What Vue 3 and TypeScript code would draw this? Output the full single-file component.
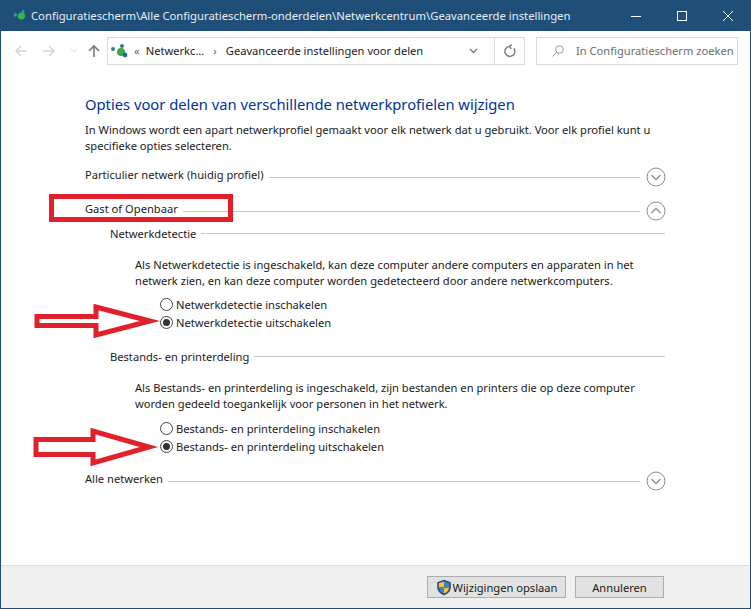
<template>
  <div class="window">
    <header class="titlebar">
      <svg class="title-icon" width="16" height="16" viewBox="0 0 16 16">
        <circle cx="3.5" cy="7" r="1.8" fill="#2f9ba8" />
        <circle cx="9.5" cy="8" r="3.6" fill="#39b54a" />
        <circle cx="11" cy="3.5" r="1.5" fill="#2f9ba8" />
      </svg>
      <span class="title-text">{{ title }}</span>
      <div class="win-btns">
        <svg width="12" height="12" viewBox="0 0 12 12"><path d="M1 6.500h10" stroke="#fff" fill="none" /></svg>
        <svg width="12" height="12" viewBox="0 0 12 12"><rect x="1.500" y="1.500" width="9" height="9" stroke="#fff" fill="none" /></svg>
        <svg width="12" height="12" viewBox="0 0 12 12"><path d="M1 1l10 10M11 1L1 11" stroke="#fff" fill="none" /></svg>
      </div>
    </header>

    <nav class="toolbar">
      <div class="nav-btns">
        <svg width="14" height="14" viewBox="0 0 14 14"><path d="M13 7H2M7 2L2 7l5 5" stroke="#d2d2d2" stroke-width="1.400" fill="none" /></svg>
        <svg width="14" height="14" viewBox="0 0 14 14"><path d="M1 7h11M7 2l5 5-5 5" stroke="#d2d2d2" stroke-width="1.400" fill="none" /></svg>
        <svg width="8" height="6" viewBox="0 0 8 6"><path d="M1 1l3 3 3-3" stroke="#d8d8d8" fill="none" /></svg>
        <svg class="up" width="14" height="14" viewBox="0 0 14 14"><path d="M7 13V2M2 7l5-5 5 5" stroke="#7a7a7a" stroke-width="1.600" fill="none" /></svg>
      </div>
      <div class="address">
        <svg width="18" height="16" viewBox="0 0 18 16">
          <circle cx="3" cy="6" r="2" fill="#2f7f8f" />
          <circle cx="11" cy="9" r="4" fill="#39a845" />
          <circle cx="12" cy="3" r="2" fill="#2f7f8f" />
          <circle cx="15" cy="12" r="2.400" fill="#2467a8" />
        </svg>
        <span class="crumb-sep">«</span>
        <span>Netwerkc...</span>
        <span class="crumb-arrow">›</span>
        <span>Geavanceerde instellingen voor delen</span>
        <svg class="addr-drop" width="9" height="6" viewBox="0 0 9 6"><path d="M1 1l3.500 3.500L8 1" stroke="#777" stroke-width="1.300" fill="none" /></svg>
        <span class="refresh">
          <svg width="14" height="14" viewBox="0 0 14 14"><path d="M10.800 4.200A5 5 0 1 1 6 2.400M6 2.400L8.800 0.800M6 2.400l2.400 2.400" stroke="#777" stroke-width="1.400" fill="none" /></svg>
        </span>
      </div>
      <div class="search">
        <svg width="14" height="14" viewBox="0 0 14 14"><circle cx="8.500" cy="5.500" r="3.800" stroke="#999" fill="none" /><path d="M5.800 8.200L1.500 12.500" stroke="#999" fill="none" /></svg>
        <span>In Configuratiescherm zoeken</span>
      </div>
    </nav>

    <main class="content">
      <h1>Opties voor delen van verschillende netwerkprofielen wijzigen</h1>
      <p class="intro">In Windows wordt een apart netwerkprofiel gemaakt voor elk netwerk dat u gebruikt. Voor elk profiel kunt u specifieke opties selecteren.</p>

      <div class="profile first">
        <span>Particulier netwerk (huidig profiel)</span>
        <i class="rule" />
        <svg class="toggle" width="20" height="20" viewBox="0 0 20 20"><circle cx="10" cy="10" r="9" stroke="#8c8c8c" fill="#fff" /><path d="M5.500 8L10 12.500 14.500 8" stroke="#8c8c8c" stroke-width="1.300" fill="none" /></svg>
      </div>
      <div class="profile second">
        <span>Gast of Openbaar</span>
        <i class="rule" />
        <svg class="toggle" width="20" height="20" viewBox="0 0 20 20"><circle cx="10" cy="10" r="9" stroke="#8c8c8c" fill="#fff" /><path d="M5.500 12L10 7.500 14.500 12" stroke="#8c8c8c" stroke-width="1.300" fill="none" /></svg>
        <svg class="mark-box" width="184" height="28" viewBox="0 0 184 28"><rect x="2.500" y="2.500" width="179" height="23" stroke="#e2202c" stroke-width="5" fill="none" /></svg>
      </div>

      <section v-for="s in sections" :key="s.name" class="setting">
        <div class="setting-head">
          <span>{{ s.name }}</span>
          <i class="rule" />
        </div>
        <p class="setting-text">{{ s.text }}</p>
        <div class="radios">
          <svg class="arrow" :style="{ left: `${s.arrowX}px`, top: `${s.arrowY}px` }" width="126" height="44" viewBox="0 0 126 44">
            <path :d="s.arrow" stroke="#e2202c" stroke-width="5" fill="none" />
          </svg>
          <label v-for="o in s.options" :key="o.label" class="radio">
            <span class="dot" :class="{ on: o.on }" />
            {{ o.label }}
          </label>
        </div>
      </section>

      <div class="profile last">
        <span>Alle netwerken</span>
        <i class="rule" />
        <svg class="toggle" width="20" height="20" viewBox="0 0 20 20"><circle cx="10" cy="10" r="9" stroke="#8c8c8c" fill="#fff" /><path d="M5.500 8L10 12.500 14.500 8" stroke="#8c8c8c" stroke-width="1.300" fill="none" /></svg>
      </div>
    </main>

    <footer class="footer">
      <button class="btn save">
        <svg width="16" height="17" viewBox="0 0 16 17">
          <path d="M8 .8l6.800 2.400v5c0 4-3 6.800-6.800 8C4.200 15 1.200 12.200 1.200 8.200v-5z" fill="#2b4f7e" />
          <path d="M8 2.400v6H2.800V4.200zM8 8.400h5.200C13 11.400 10.800 13.600 8 14.600z" fill="#f4c23c" />
          <path d="M8 2.400l5.200 1.800v4.200H8zM8 8.400v6.200c-2.800-1-4.800-3.200-5.200-6.200z" fill="#3f7fc4" />
        </svg>
        Wijzigingen opslaan
      </button>
      <button class="btn cancel">Annuleren</button>
    </footer>
  </div>
</template>

<script setup lang="ts">
const title = 'Configuratiescherm\\Alle Configuratiescherm-onderdelen\\Netwerkcentrum\\Geavanceerde instellingen'

const sections = [
  {
    name: 'Netwerkdetectie',
    text: 'Als Netwerkdetectie is ingeschakeld, kan deze computer andere computers en apparaten in het netwerk zien, en kan deze computer worden gedetecteerd door andere netwerkcomputers.',
    arrowX: -126,
    arrowY: 4,
    arrow: 'M3 17.500H62V8L116 22 62 36V26.500H3Z',
    options: [
      { label: 'Netwerkdetectie inschakelen', on: false },
      { label: 'Netwerkdetectie uitschakelen', on: true }
    ]
  },
  {
    name: 'Bestands- en printerdeling',
    text: 'Als Bestands- en printerdeling is ingeschakeld, zijn bestanden en printers die op deze computer worden gedeeld toegankelijk voor personen in het netwerk.',
    arrowX: -127,
    arrowY: 6,
    arrow: 'M3 14.500H60V6L116 22 60 38V29.500H3Z',
    options: [
      { label: 'Bestands- en printerdeling inschakelen', on: false },
      { label: 'Bestands- en printerdeling uitschakelen', on: true }
    ]
  }
]
</script>

<style>
html, body { margin: 0; background: #fff; }
</style>

<style scoped>
.window {
  width: 751px;
  height: 609px;
  display: flex;
  flex-direction: column;
  box-sizing: border-box;
  border: 1px solid #1f4e79;
  border-top: 0;
  font-family: "Noto Sans", "Open Sans", sans-serif;
  font-size: 11.15px;
  color: #1a1a1a;
  overflow: hidden;
}
.titlebar {
  height: 31px;
  flex: none;
  background: #1f4e79;
  display: flex;
  align-items: center;
  padding-left: 11px;
  color: #e8eef4;
  font-size: 11.28px;
}
.title-icon { margin-right: 3px; }
.title-text { white-space: nowrap; }
.win-btns {
  margin-left: auto;
  display: flex;
  gap: 34px;
  padding-right: 16px;
  padding-top: 1px;
}
.toolbar {
  height: 39px;
  flex: none;
  display: flex;
  align-items: center;
  padding-left: 13px;
}
.nav-btns {
  width: 93px;
  display: flex;
  align-items: center;
  gap: 14px;
}
.up { margin-left: -5px; }
.address {
  width: 418px;
  height: 28px;
  box-sizing: border-box;
  border: 1px solid #dadada;
  display: flex;
  align-items: center;
  padding-left: 2px;
  gap: 6px;
  white-space: nowrap;
}
.crumb-sep { color: #666; }
.crumb-arrow { color: #666; margin: 0 3px; }
.addr-drop { margin-left: auto; margin-right: 10px; }
.refresh {
  width: 29px;
  height: 100%;
  border-left: 1px solid #dadada;
  display: flex;
  align-items: center;
  justify-content: center;
}
.search {
  width: 202px;
  height: 28px;
  box-sizing: border-box;
  margin-left: 11px;
  border: 1px solid #dadada;
  display: flex;
  align-items: center;
  gap: 11px;
  padding-left: 14px;
  color: #6d6d6d;
  white-space: nowrap;
}
.content {
  flex: 1;
  padding: 24px 0 0 84px;
  background: #fff;
}
h1 {
  margin: 0;
  font-size: 14.75px;
  line-height: 20px;
  font-weight: 400;
  color: #003399;
}
.intro {
  margin: 8px 0 0;
  width: 580px;
  line-height: 16px;
}
.profile {
  display: flex;
  align-items: center;
  height: 20px;
  width: 581px;
  position: relative;
}
.profile.first { margin-top: 10px; }
.profile.second { margin-top: 14px; }
.profile.last { margin-top: 13px; }
.rule {
  flex: 1;
  height: 1px;
  background: #c8c8c8;
  margin: 1px 0 0 5px;
}
.profile .rule { margin-top: 6px; }
.toggle { margin: 5px 0 0 6px; flex: none; }
.mark-box {
  position: absolute;
  left: -36px;
  top: -4px;
}
.setting { margin-left: 25px; }
.setting-head {
  display: flex;
  align-items: center;
  height: 20px;
  width: 555px;
  margin-top: 5px;
}
.setting-text {
  margin: 14px 0 0 25px;
  width: 530px;
  line-height: 16px;
}
.radios {
  position: relative;
  margin: 6px 0 0 50px;
  display: flex;
  flex-direction: column;
}
.setting + .setting .radios { margin-top: 7px; }
.radio {
  height: 18px;
  display: flex;
  align-items: center;
  gap: 3px;
  white-space: nowrap;
}
.dot {
  width: 11px;
  height: 11px;
  border: 1px solid #444;
  border-radius: 50%;
  background: #fff;
  position: relative;
  flex: none;
}
.dot.on::after {
  content: "";
  position: absolute;
  inset: 2px;
  border-radius: 50%;
  background: #333;
}
.arrow {
  position: absolute;
}
.setting + .setting .setting-head { margin-top: 15px; }
.footer {
  height: 43px;
  flex: none;
  box-sizing: border-box;
  background: #f0f0f0;
  border-top: 1px solid #dfdfdf;
  display: flex;
  align-items: center;
  padding-left: 426px;
  gap: 9px;
}
.btn {
  height: 22px;
  box-sizing: border-box;
  border: 1px solid #adadad;
  background: #e1e1e1;
  font: inherit;
  color: #1a1a1a;
  display: flex;
  align-items: center;
  justify-content: center;
  padding: 0;
}
.save { width: 139px; gap: 1px; }
.cancel { width: 89px; }
</style>
